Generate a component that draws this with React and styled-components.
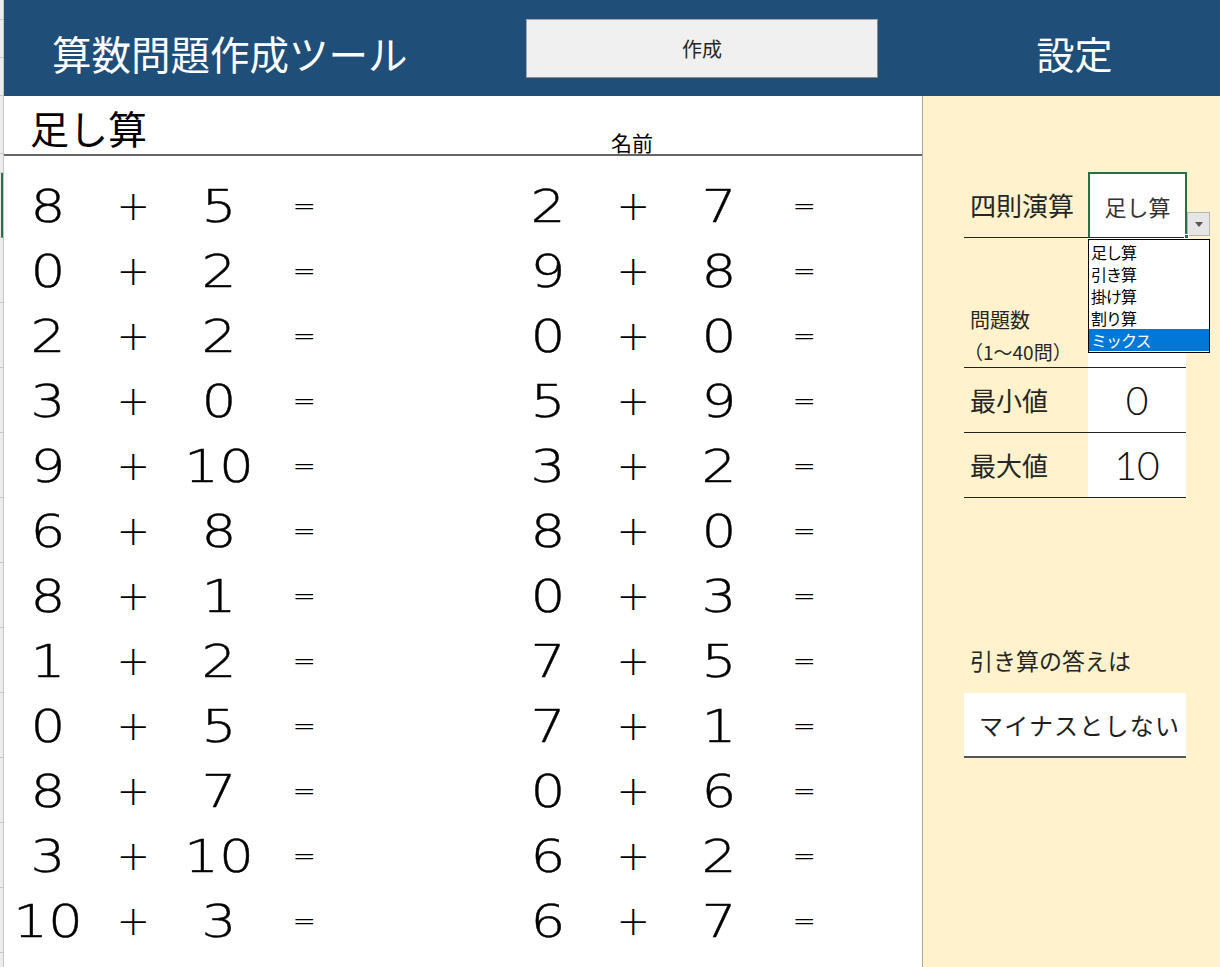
import React from 'react'
import styled, { createGlobalStyle } from 'styled-components'

const GlobalStyle = createGlobalStyle`
  html, body {
    margin: 0;
    padding: 0;
    overflow: hidden;
  }
  body {
    font-family: "Noto Sans CJK JP", "Noto Sans", sans-serif;
    color: #000;
  }
  * {
    box-sizing: border-box;
  }
`

const left = [
  [8, 5], [0, 2], [2, 2], [3, 0], [9, 10], [6, 8],
  [8, 1], [1, 2], [0, 5], [8, 7], [3, 10], [10, 3],
]
const right = [
  [2, 7], [9, 8], [0, 0], [5, 9], [3, 2], [8, 0],
  [0, 3], [7, 5], [7, 1], [0, 6], [6, 2], [6, 7],
]
const options = ['足し算', '引き算', '掛け算', '割り算', 'ミックス']
const stripCells = [20, 38, 38, 58, 19, ...Array(12).fill(65)]

export default function App() {
  return (
    <Page>
      <GlobalStyle />
      <Strip>
        {stripCells.map((h, i) => (
          <StripCell key={i} $h={h} $active={i === 5} />
        ))}
      </Strip>
      <Content>
        <Header>
          <HeaderMain>
            <AppTitle>算数問題作成ツール</AppTitle>
            <CreateButton>作成</CreateButton>
          </HeaderMain>
          <PanelTitle>設定</PanelTitle>
        </Header>
        <Body>
          <Sheet>
            <TitleRow>
              <SheetTitle>足し算</SheetTitle>
              <NameLabel>名前</NameLabel>
            </TitleRow>
            <Problems>
              {left.map((l, i) => (
                <ProblemRow key={i}>
                  <Num><span>{l[0]}</span></Num>
                  <Op>+</Op>
                  <Num><span>{l[1]}</span></Num>
                  <Eq>=</Eq>
                  <div />
                  <Num><span>{right[i][0]}</span></Num>
                  <Op>+</Op>
                  <Num><span>{right[i][1]}</span></Num>
                  <Eq>=</Eq>
                </ProblemRow>
              ))}
            </Problems>
          </Sheet>
          <Panel>
            <Settings>
              <SettingRow $h={65}>
                <Label>四則演算</Label>
                <SelectCell>
                  足し算
                  <ArrowButton />
                  <FillHandle />
                  <OptionList>
                    {options.map((o, i) => (
                      <OptionItem key={o} $selected={i === 4}>{o}</OptionItem>
                    ))}
                  </OptionList>
                </SelectCell>
              </SettingRow>
              <SettingRow $h={130}>
                <StackLabel>
                  <span>問題数</span>
                  <small>（1〜40問）</small>
                </StackLabel>
                <Value />
              </SettingRow>
              <SettingRow $h={65}>
                <Label>最小値</Label>
                <Value>0</Value>
              </SettingRow>
              <SettingRow $h={65}>
                <Label>最大値</Label>
                <Value>10</Value>
              </SettingRow>
            </Settings>
            <NoteLabel>引き算の答えは</NoteLabel>
            <AnswerBox>マイナスとしない</AnswerBox>
          </Panel>
        </Body>
      </Content>
    </Page>
  )
}

const Page = styled.div`
  display: flex;
  width: 1220px;
  height: 967px;
  overflow: hidden;
`

const Strip = styled.div`
  width: 4px;
  flex-shrink: 0;
  background: #ececec;
  border-right: 1px solid #c4c4c4;
  display: flex;
  flex-direction: column;
`

const StripCell = styled.div`
  height: ${p => p.$h}px;
  flex-shrink: 0;
  border-bottom: 1px solid #c8c8c8;
  border-right: ${p => (p.$active ? '2px solid #217346' : 'none')};
`

const Content = styled.div`
  flex: 1;
  display: flex;
  flex-direction: column;
`

const Header = styled.header`
  height: 96px;
  flex-shrink: 0;
  background: #1f4e78;
  display: grid;
  grid-template-columns: 919px 1fr;
  align-items: center;
`

const HeaderMain = styled.div`
  display: grid;
  grid-template-columns: 522px 352px;
  align-items: center;
`

const AppTitle = styled.h1`
  margin: 0;
  padding: 10px 0 0 48px;
  color: #fff;
  font-size: 39.5px;
  font-weight: 400;
  line-height: 1;
  white-space: nowrap;
`

const CreateButton = styled.button`
  height: 59px;
  margin-top: 1px;
  background: #f0f0f0;
  border: 1px solid #a8a8a8;
  border-right-color: #8a8a8a;
  border-bottom-color: #8a8a8a;
  border-radius: 0;
  font-family: "Noto Sans CJK JP", sans-serif;
  font-size: 20px;
  color: #262626;
  padding: 0;
`

const PanelTitle = styled.div`
  color: #fff;
  font-size: 38px;
  line-height: 1;
  text-align: center;
  padding: 10px 0 0 6px;
`

const Body = styled.div`
  flex: 1;
  display: flex;
`

const Sheet = styled.main`
  width: 919px;
  flex-shrink: 0;
  background: #fff;
  border-right: 1px solid #a6a6a6;
`

const TitleRow = styled.div`
  height: 60px;
  border-bottom: 2px solid #666;
  display: grid;
  grid-template-columns: 607px auto;
  align-items: end;
`

const SheetTitle = styled.div`
  align-self: center;
  padding: 4px 0 0 26px;
  font-size: 39px;
  line-height: 1;
`

const NameLabel = styled.div`
  font-size: 21px;
  line-height: 1;
  padding-bottom: 1px;
`

const Problems = styled.div`
  padding: 17px 0 0 1px;
`

const ProblemRow = styled.div`
  height: 65px;
  display: grid;
  grid-template-columns: repeat(4, 85.5px) 158px repeat(4, 85.5px);
  align-items: center;
  font-family: "DejaVu Sans", "Noto Sans", sans-serif;
  font-weight: 200;
`

const Num = styled.div`
  text-align: center;
  font-size: 44px;
  line-height: 1;
  -webkit-text-stroke: 0.4px #000;
  span {
    display: inline-block;
    transform: translateY(1px) scaleX(1.25);
  }
`

const Op = styled.div`
  text-align: center;
  font-size: 40px;
  line-height: 1;
`

const Eq = styled.div`
  text-align: center;
  font-size: 28px;
  line-height: 1;
`

const Panel = styled.aside`
  flex: 1;
  background: #fff2cc;
  padding: 77px 0 0 41px;
  color: #262626;
`

const Settings = styled.div`
  width: 222px;
`

const SettingRow = styled.div`
  height: ${p => p.$h}px;
  display: grid;
  grid-template-columns: 124px 98px;
  border-bottom: 1px solid #222;
`

const Label = styled.div`
  display: flex;
  align-items: center;
  padding-left: 6px;
  font-size: 26px;
  line-height: 1;
`

const StackLabel = styled.div`
  display: flex;
  flex-direction: column;
  justify-content: flex-end;
  padding: 0 0 6px 6px;
  font-size: 20px;
  line-height: 1;
  span {
    margin-bottom: 12px;
  }
  small {
    font-size: 19px;
    margin-left: -6px;
  }
`

const Value = styled.div`
  background: #fff;
  display: flex;
  align-items: center;
  justify-content: center;
  font-family: Lato, "Noto Sans", sans-serif;
  font-weight: 300;
  font-size: 39px;
  line-height: 1;
  color: #111;
`

const SelectCell = styled.div`
  position: relative;
  background: #fff;
  border: 2px solid #217346;
  border-bottom: none;
  margin: -1px -1px 0 0;
  display: flex;
  align-items: center;
  justify-content: center;
  font-size: 22px;
  line-height: 1;
  color: #333;
`

const ArrowButton = styled.div`
  position: absolute;
  left: 97px;
  top: 38px;
  width: 23px;
  height: 24px;
  background: #e6e6e6;
  border: 1px solid #b4b4b4;
  &::after {
    content: '';
    position: absolute;
    left: 7px;
    top: 9px;
    border-left: 4px solid transparent;
    border-right: 4px solid transparent;
    border-top: 5px solid #555;
  }
`

const FillHandle = styled.div`
  position: absolute;
  right: -4px;
  bottom: -2px;
  width: 5px;
  height: 5px;
  background: #217346;
  border: 1px solid #fff;
`

const OptionList = styled.ul`
  position: absolute;
  left: -2px;
  top: 65px;
  width: 122px;
  margin: 0;
  padding: 1px 0;
  list-style: none;
  background: #fff;
  border: 1px solid #000;
  z-index: 2;
`

const OptionItem = styled.li`
  height: 22px;
  padding-left: 2px;
  font-size: 16px;
  line-height: 22px;
  letter-spacing: -1px;
  color: ${p => (p.$selected ? '#fff' : '#000')};
  background: ${p => (p.$selected ? '#0078d7' : 'transparent')};
`

const NoteLabel = styled.div`
  margin-top: 130px;
  height: 65px;
  display: flex;
  align-items: center;
  padding-left: 6px;
  font-size: 23px;
  line-height: 1;
`

const AnswerBox = styled.div`
  width: 222px;
  height: 65px;
  background: #fff;
  border-bottom: 2px solid #555;
  display: flex;
  align-items: center;
  padding-left: 15px;
  font-size: 24px;
  letter-spacing: 1.2px;
  line-height: 1;
  color: #1e1e1e;
  white-space: nowrap;
`
